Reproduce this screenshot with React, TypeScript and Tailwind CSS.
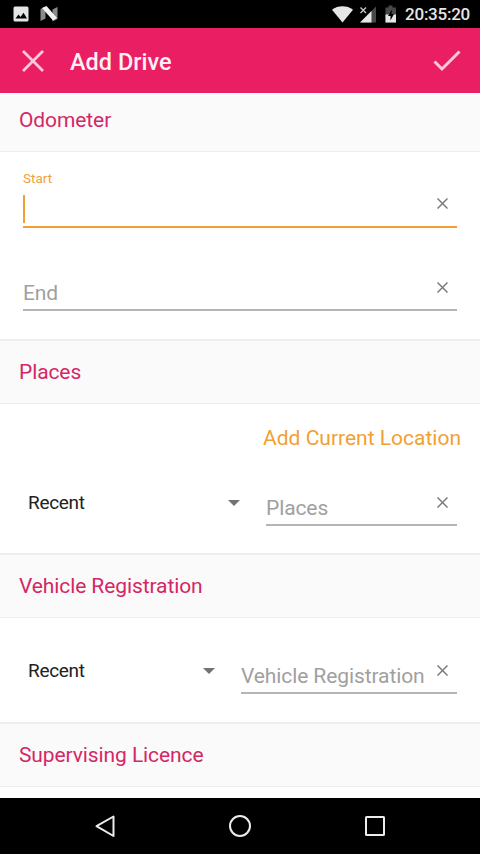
import { FC, ReactNode } from "react";

const StatusBar: FC = () => (
  <div className="flex h-7 shrink-0 items-center bg-black pr-[10px] pl-[13px] text-[#e6e6e6]">
    <svg className="h-4 w-4" viewBox="0 0 16 16">
      <rect x="0.5" y="0.5" width="15" height="15" rx="1.5" fill="currentColor" />
      <path d="M2.5 12.5l3-4 2 2.5 3-4.2 3.5 5.7z" fill="#000" />
    </svg>
    <svg className="ml-[11px] h-4 w-[18px]" viewBox="0 0 18 16">
      <path d="M0.5 3l5-2.500v12l-5 2.500zM12.500 3.500l5-2.500v12l-5 2.500z" fill="#8a8a8a" />
      <path d="M2 2l4.500-2L17 12l-4 2.500z" fill="#f2f2f2" />
    </svg>
    <svg className="ml-auto h-[17px] w-[21px]" viewBox="0 0 21 17">
      <path d="M10.5 16.5L0 3.700C6 -0.9 15 -0.9 21 3.700z" fill="currentColor" />
    </svg>
    <svg className="ml-[6px] h-[17px] w-[18px]" viewBox="0 0 18 17">
      <path d="M17 0.5v16H1z" fill="#484848" />
      <path d="M12.5 5v11.500H1z" fill="currentColor" />
      <path d="M1.500 1.500l5.500 5.500M7 1.500L1.500 7" stroke="#c5c5c5" strokeWidth="1.4" />
    </svg>
    <svg className="ml-[8px] h-[18px] w-[12px]" viewBox="0 0 12 18">
      <path d="M3.5 0.5h4v2h3.500v15H0.5v-15h3z" fill="#484848" />
      <path d="M0.5 9.500h10.500v8H0.5z" fill="currentColor" />
      <path d="M7 4.500L3 11h2.500v4.500L9 9H6.500z" fill="#000" />
    </svg>
    <span className="ml-[8px] pt-px text-[17px] leading-[27px] font-medium tracking-[-0.25px] whitespace-nowrap">
      20:35:20
    </span>
  </div>
);

const AppBar: FC = () => (
  <header className="flex h-[65px] shrink-0 items-center bg-[#e91e63] pt-px pr-[19px] pl-[22px]">
    <svg className="h-[22px] w-[22px]" viewBox="0 0 22 22" fill="none">
      <path d="M1 1l20 20M21 1L1 21" stroke="#fbc9da" strokeWidth="2.8" />
    </svg>
    <h1 className="ml-[26px] pt-px text-[23.5px] leading-8 font-medium text-[#fdf0f5]">Add Drive</h1>
    <svg className="ml-auto h-[22px] w-[28px]" viewBox="0 0 28 22" fill="none">
      <path d="M1.500 11.500l7.500 7.500L26.500 1.500" stroke="#fbc9da" strokeWidth="3" />
    </svg>
  </header>
);

const SectionTitle: FC<{ children: ReactNode }> = ({ children }) => (
  <h2 className="flex h-[65px] shrink-0 items-center border-t-2 border-b border-[#eeeeee] bg-[#fafafa] pt-[2px] pl-[19px] text-[21px] tracking-[-0.1px] text-[#d42765]">
    {children}
  </h2>
);

const ClearIcon: FC = () => (
  <svg className="h-[11px] w-[11px] shrink-0" viewBox="0 0 11 11" fill="none">
    <path d="M0.5 0.5l10 10M10.5 0.5l-10 10" stroke="#7c7c7c" strokeWidth="1.5" />
  </svg>
);

const Field: FC<{ label: string }> = ({ label }) => (
  <div className="flex h-9 flex-1 justify-between border-b-2 border-[#b5b5b5] pr-[9px]">
    <span className="pt-[5px] text-[21px] leading-[26px] tracking-[-0.1px] whitespace-nowrap text-[#a0a0a0]">
      {label}
    </span>
    <div className="pt-[7px]">
      <ClearIcon />
    </div>
  </div>
);

const ActiveField: FC<{ label: string }> = ({ label }) => (
  <div className="border-b-2 border-[#f2a033] pr-[9px]">
    <div className="text-[13.5px] leading-4 text-[#f2a033]">{label}</div>
    <div className="flex h-10 justify-between pt-[9px]">
      <div className="h-[28px] w-[2px] bg-[#f2a033]" />
      <div className="pt-[3px]">
        <ClearIcon />
      </div>
    </div>
  </div>
);

const Select: FC<{ value: string }> = ({ value }) => (
  <div className="mt-px flex h-6 flex-1 items-center justify-between text-[19px] tracking-[-0.3px] text-[#212121]">
    {value}
    <svg className="h-[6px] w-[12px]" viewBox="0 0 12 6">
      <path d="M0 0h12L6 6z" fill="#737373" />
    </svg>
  </div>
);

const NavBar: FC = () => (
  <nav className="flex h-14 shrink-0 items-center justify-between bg-black px-[93px] text-[#ececec]">
    <svg className="h-6 w-6" viewBox="0 0 24 24" fill="none" stroke="currentColor" strokeWidth="2" strokeLinejoin="round">
      <path d="M20.5 2.500v19.500L3.500 12.200z" />
    </svg>
    <svg className="h-6 w-6" viewBox="0 0 24 24" fill="none" stroke="currentColor" strokeWidth="2">
      <circle cx="12" cy="12" r="10" />
    </svg>
    <svg className="h-6 w-6" viewBox="0 0 24 24" fill="none" stroke="currentColor" strokeWidth="2">
      <rect x="3" y="3" width="18" height="18" rx="0.5" />
    </svg>
  </nav>
);

export default function App() {
  return (
    <div className="flex h-[854px] w-[480px] flex-col overflow-hidden bg-white font-[Roboto,sans-serif]">
      <StatusBar />
      <AppBar />
      <main className="flex flex-1 flex-col overflow-hidden">
        {/* first section is partly scrolled under the app bar */}
        <div className="-mt-[6px] flex flex-col">
          <SectionTitle>Odometer</SectionTitle>
          <section className="h-[187px] px-[23px] pt-[18px]">
            <ActiveField label="Start" />
            <div className="mt-[47px] flex">
              <Field label="End" />
            </div>
          </section>

          <SectionTitle>Places</SectionTitle>
          <section className="h-[149px] pr-[23px] pl-7">
            <div className="-mr-1 pt-5 text-right text-[21px] leading-[28px] text-[#f2a033]">
              Add Current Location
            </div>
            <div className="mt-[38px] flex">
              <Select value="Recent" />
              <div className="ml-[26px] flex w-[191px]">
                <Field label="Places" />
              </div>
            </div>
          </section>

          <SectionTitle>Vehicle Registration</SectionTitle>
          <section className="h-[104px] pt-[40px] pr-[23px] pl-7">
            <div className="flex">
              <Select value="Recent" />
              <div className="ml-[26px] flex w-[216px]">
                <Field label="Vehicle Registration" />
              </div>
            </div>
          </section>

          <SectionTitle>Supervising Licence</SectionTitle>
        </div>
      </main>
      <NavBar />
    </div>
  );
}
